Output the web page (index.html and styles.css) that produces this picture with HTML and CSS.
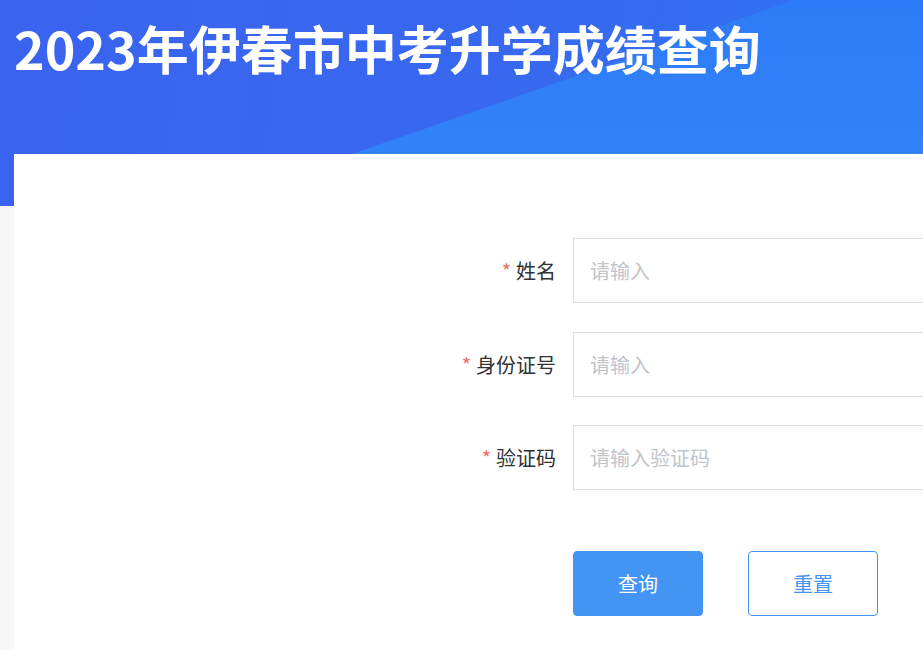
FILE: index.html
```html
<!DOCTYPE html>
<html lang="zh-CN">
<head>
<meta charset="utf-8">
<title>2023年伊春市中考升学成绩查询</title>
<link rel="stylesheet" href="styles.css">
</head>
<body>
<div class="page">
  <header class="banner">
    <h1 class="title">2023年伊春市中考升学成绩查询</h1>
  </header>
  <main class="card">
    <form class="form">
      <label class="label" for="name"><span class="req">*</span>姓名</label>
      <input class="input" id="name" type="text" placeholder="请输入">
      <label class="label" for="idno"><span class="req">*</span>身份证号</label>
      <input class="input" id="idno" type="text" placeholder="请输入">
      <label class="label" for="code"><span class="req">*</span>验证码</label>
      <input class="input" id="code" type="text" placeholder="请输入验证码">
      <div class="actions">
        <button type="button" class="btn btn-primary">查询</button>
        <button type="button" class="btn btn-plain">重置</button>
      </div>
    </form>
  </main>
</div>
</body>
</html>
```
FILE: styles.css
```css
html, body {
  margin: 0;
  padding: 0;
  overflow: hidden;
  background: #f7f7f7;
  font-family: "Noto Sans CJK SC", "Noto Sans", sans-serif;
}

.page {
  width: 1200px;
  min-height: 650px;
}

.banner {
  position: relative;
  height: 206px;
  background: linear-gradient(100deg, #3a63ef 0%, #3868ef 40%, #2f74f2 75%, #2c77f7 100%);
  overflow: hidden;
}

.banner::before {
  content: "";
  position: absolute;
  inset: 0;
  background: linear-gradient(180deg, #2e7bf7 0%, #3385f9 100%);
  clip-path: polygon(203px 206px, 794px 0, 100% 0, 100% 100%);
}

.title {
  position: relative;
  margin: 0;
  padding: 16px 0 0 14px;
  font-size: 52px;
  line-height: 64px;
  font-weight: 700;
  color: #fff;
  letter-spacing: 0;
}

.card {
  position: relative;
  margin: -52px 0 0 14px;
  background: #fff;
  min-height: 496px;
  padding-top: 84px;
}

.form {
  display: grid;
  grid-template-columns: 542px 700px;
  column-gap: 17px;
  row-gap: 28.5px;
  align-items: center;
}

.label {
  text-align: right;
  font-size: 20px;
  color: #303133;
}

.req {
  color: #f56c6c;
  margin-right: 5px;
}

.input {
  box-sizing: border-box;
  height: 65px;
  padding: 0 16px;
  border: 1px solid #dcdfe6;
  border-radius: 0;
  font-family: inherit;
  font-size: 20px;
  color: #303133;
  outline: none;
}

.input::placeholder {
  color: #c0c4cc;
}

.actions {
  grid-column: 2;
  display: flex;
  gap: 45px;
  margin-top: 32.5px;
}

.btn {
  box-sizing: border-box;
  width: 130px;
  height: 65px;
  border-radius: 4px;
  font-family: inherit;
  font-size: 20px;
  cursor: pointer;
}

.btn-primary {
  background: #4494f4;
  border: 1px solid #4494f4;
  color: #fff;
}

.btn-plain {
  background: #fff;
  border: 1px solid #4494f4;
  color: #4494f4;
}
```
